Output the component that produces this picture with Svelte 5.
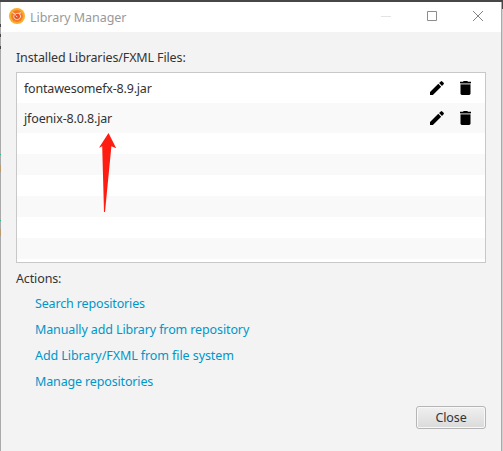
<script>
  const libraries = [
    { name: 'fontawesomefx-8.9.jar', spacing: -0.19 },
    { name: 'jfoenix-8.0.8.jar', spacing: -0.15 }
  ];
  const emptyRows = [1, 2, 3, 4, 5, 6];
  const actions = [
    { label: 'Search repositories', spacing: -0.15 },
    { label: 'Manually add Library from repository', spacing: -0.12 },
    { label: 'Add Library/FXML from file system', spacing: -0.08 },
    { label: 'Manage repositories', spacing: -0.15 }
  ];
</script>

<div class="desktop">
  <div class="window">
    <header>
      <svg class="logo" width="16" height="16" viewBox="0 0 16 16">
        <circle cx="8" cy="8" r="8" fill="#f9ae2b" />
        <circle cx="8" cy="8" r="5.900" fill="#f47b24" />
        <circle cx="8.200" cy="8" r="3.500" fill="#ee4f22" />
        <path d="M3.300 4.600L6.500 6.100C4.200 7 4.300 10 6.400 11.100C8.800 12.200 11.600 10.700 11.500 8C11.400 6.800 10.700 5.900 9.700 5.400L12.300 4.800M6.500 6.100C7.400 5.300 8.600 5.100 9.700 5.400M6.800 7.500L8.300 9.200" fill="none" stroke="#ffe8d8" stroke-width="1" />
      </svg>
      <h1>Library Manager</h1>
      <div class="controls">
        <svg width="10" height="10" viewBox="0 0 10 10"><path d="M0 5.5h10" stroke="#e3e3e3" /></svg>
        <svg width="10" height="10" viewBox="0 0 10 10"><path d="M.5.5h9v9h-9z" fill="none" stroke="#8c8c8c" /></svg>
        <svg width="10" height="10" viewBox="0 0 10 10"><path d="M0 0l10 10M10 0L0 10" stroke="#858585" /></svg>
      </div>
    </header>
    <main>
      <div class="caption installed">Installed Libraries/FXML Files:</div>
      <div class="list">
        {#each libraries as lib}
          <div class="row library">
            <span class="name" style="letter-spacing: {lib.spacing}px">{lib.name}</span>
            <svg class="pencil" width="14" height="14" viewBox="0 0 14 14"><path d="M0 11.100V14h2.900L11.200 5.700 8.300 2.800zM9.100 2L10.800.4a1 1 0 0 1 1.400 0l1.400 1.400a1 1 0 0 1 0 1.400L12 4.900z" /></svg>
            <svg class="trash" width="11" height="14" viewBox="0 0 11 14"><path d="M0 .8h3L3.700 0h3.600L8 .8h3v1.400H0z" /><path d="M.5 2.200h10v1.300H.5z" fill="#777" /><path d="M.5 3.500h10v9.100q0 1.400-1.400 1.400H1.900Q.5 14 .5 12.600z" /></svg>
          </div>
        {/each}
        {#each emptyRows as n (n)}
          <div class="row"></div>
        {/each}
        <svg class="arrow" width="18" height="80" viewBox="0 0 18 80"><path d="M9.500 0L17.200 15.200L12.400 13.300L6 79H5L3.200 13.300L0 14.700Z" fill="#ff1d12" /></svg>
      </div>
      <div class="caption actions-title">Actions:</div>
      <nav>
        {#each actions as action}
          <span class="link" style="letter-spacing: {action.spacing}px">{action.label}</span>
        {/each}
      </nav>
      <footer><button>Close</button></footer>
    </main>
  </div>
</div>

<style>
  .desktop {
    box-sizing: border-box;
    width: 503px;
    height: 451px;
    padding: 2px 1px 0 1px;
    overflow: hidden;
    background:
      linear-gradient(#474747, #474747) 0 0 / 503px 2px no-repeat,
      linear-gradient(#474747, #474747) 502px 0 / 1px 9px no-repeat,
      linear-gradient(#474747, #474747) 0 24px / 1px 3px no-repeat,
      linear-gradient(#474747, #474747) 0 34px / 1px 3px no-repeat,
      linear-gradient(#474747, #474747) 0 46px / 1px 3px no-repeat,
      linear-gradient(#35b486, #35b486) 0 154px / 1px 1px no-repeat,
      linear-gradient(#b99a6a, #b99a6a) 0 165px / 1px 7px no-repeat,
      linear-gradient(#35b486, #35b486) 0 220px / 1px 1px no-repeat,
      linear-gradient(#b99a6a, #b99a6a) 0 229px / 1px 7px no-repeat,
      linear-gradient(#d0d0d0, #d0d0d0) 502px 0 / 1px 451px no-repeat,
      #a9a9a9;
    font-family: "Noto Sans", "Open Sans", sans-serif;
    font-size: 12.5px;
    color: #333;
  }
  .window {
    box-sizing: border-box;
    width: 501px;
    height: 449px;
    border-right: 1px solid #aaa;
    background: #f3f3f3;
  }
  header {
    display: flex;
    align-items: center;
    height: 30px;
    padding: 0 18px 0 8px;
    background: #fff;
  }
  .logo { margin-top: -2px; }
  h1 {
    margin: 0 0 0 5px;
    font-size: 12.5px;
    font-weight: 400;
    letter-spacing: -0.05px;
    color: #999;
  }
  .controls {
    display: flex;
    gap: 36px;
    margin: -2px 0 0 auto;
  }
  .controls svg, .row svg, .logo { display: block; flex: none; }
  main { padding: 16px 15px 0; }
  .caption, .link, .name { white-space: nowrap; }
  .caption {
    height: 20px;
    line-height: 20px;
    letter-spacing: -0.13px;
  }
  .installed { margin-bottom: 4px; }
  .list {
    position: relative;
    box-sizing: border-box;
    height: 191px;
    border: 1px solid #c8c8c8;
    background: #fff;
  }
  .row { height: 21px; }
  .row:nth-child(even) { background: #f9f9f9; }
  .library {
    display: flex;
    align-items: center;
    box-sizing: border-box;
    height: 30px;
    padding: 0 14px 0 7px;
  }
  .name { flex: 1; }
  .pencil { margin-right: 16px; }
  .arrow {
    position: absolute;
    left: 82px;
    top: 60px;
  }
  .actions-title { margin-top: 6px; }
  nav {
    display: flex;
    flex-direction: column;
    padding: 2px 0 0 19px;
  }
  .link {
    height: 26px;
    line-height: 26px;
    color: #0096c9;
  }
  footer {
    display: flex;
    justify-content: flex-end;
    margin-top: 11px;
  }
  button {
    box-sizing: border-box;
    width: 70px;
    height: 23px;
    padding: 0;
    border: 1px solid #b5b5b5;
    border-radius: 3px;
    background: linear-gradient(#f0f0f0, #dadada);
    box-shadow: inset 0 0 0 1px #f8f8f8;
    font: inherit;
    line-height: 20px;
    letter-spacing: -0.1px;
    color: #333;
  }
</style>
